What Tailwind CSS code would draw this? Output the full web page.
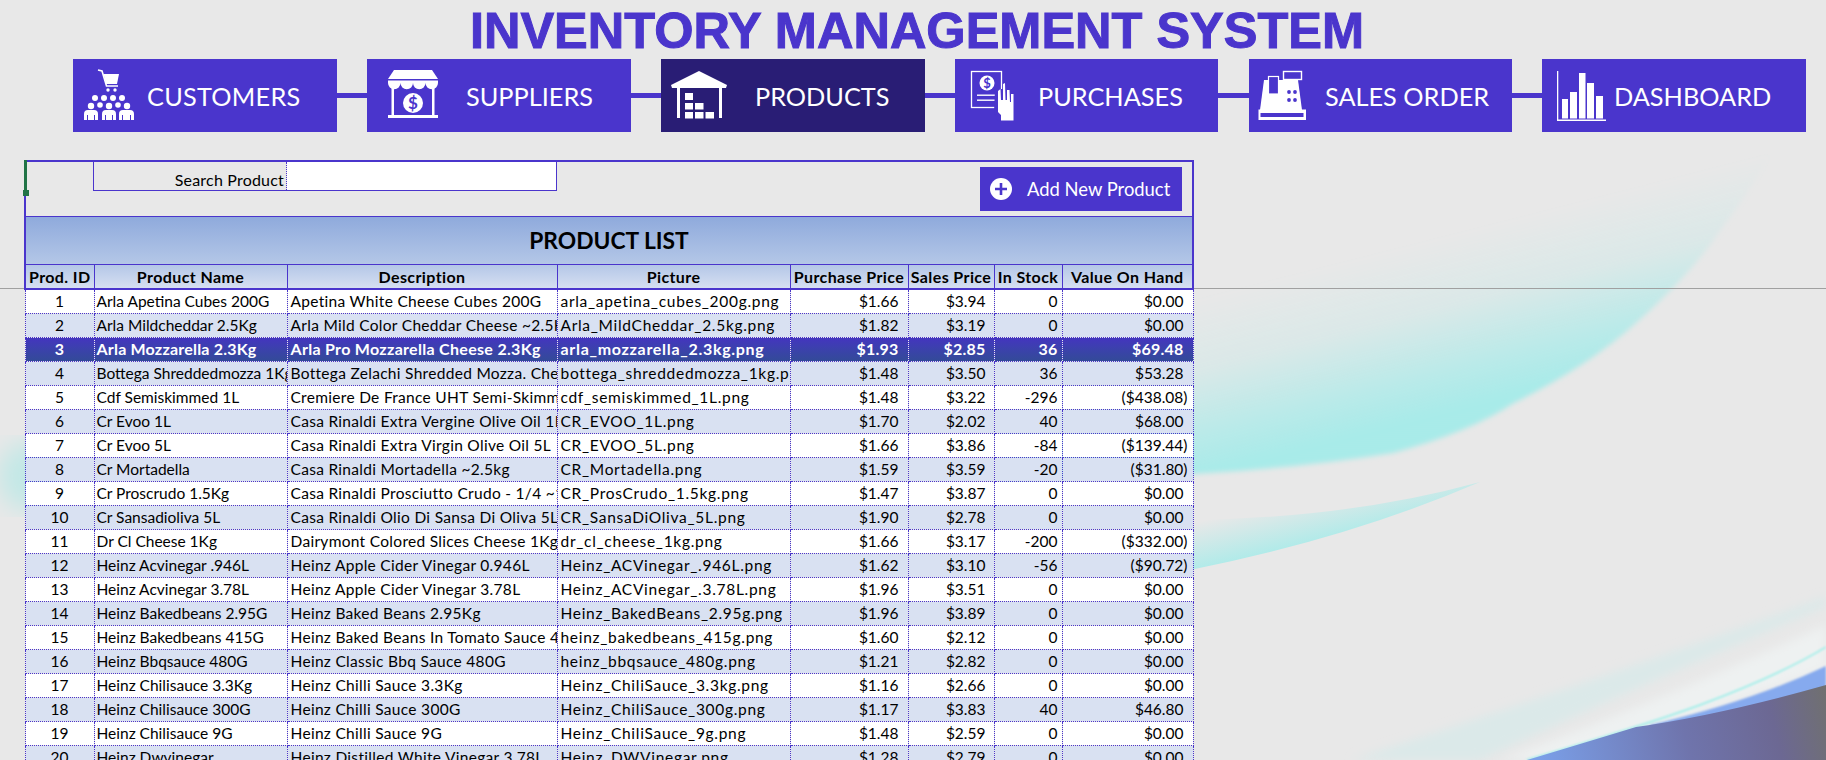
<!DOCTYPE html>
<html lang="en">
<head>
    <meta charset="UTF-8">
    <title>Inventory Management System</title>
    <script src="https://cdn.jsdelivr.net/npm/@tailwindcss/browser@4"></script>
</head>
<body class="relative w-[1826px] h-[760px] overflow-hidden bg-[#e8e8e8] font-['Lato','Liberation_Sans',sans-serif] text-black">

    <!-- background swooshes -->
    <svg class="absolute inset-0" width="1826" height="760" viewBox="0 0 1826 760">
        <defs>
            <linearGradient id="bigSwoosh" gradientUnits="userSpaceOnUse" x1="1194" y1="300" x2="1236" y2="465">
                <stop offset="0" stop-color="#a5ebe9" stop-opacity="0"/>
                <stop offset="0.4" stop-color="#a5ebe9" stop-opacity="0.2"/>
                <stop offset="0.78" stop-color="#a5ebe9" stop-opacity="0.7"/>
                <stop offset="1" stop-color="#a5ebe9" stop-opacity="0.95"/>
            </linearGradient>
            <linearGradient id="thinSwoosh" gradientUnits="userSpaceOnUse" x1="1215" y1="518" x2="1228" y2="572">
                <stop offset="0" stop-color="#a5ebe9" stop-opacity="0"/>
                <stop offset="1" stop-color="#a5ebe9" stop-opacity="1"/>
            </linearGradient>
            <linearGradient id="wedge" gradientUnits="userSpaceOnUse" x1="1540" y1="760" x2="1826" y2="690">
                <stop offset="0" stop-color="#7a9fe8"/>
                <stop offset="0.5" stop-color="#6f74ac"/>
                <stop offset="0.8" stop-color="#6c6893"/>
                <stop offset="1" stop-color="#707070"/>
            </linearGradient>
            <filter id="soft"><feGaussianBlur stdDeviation="2.5"/></filter>
            <filter id="tiny"><feGaussianBlur stdDeviation="1"/></filter>
            <filter id="softer"><feGaussianBlur stdDeviation="5"/></filter>
            <filter id="softest"><feGaussianBlur stdDeviation="12"/></filter>
        </defs>
        <path filter="url(#soft)" fill="url(#bigSwoosh)" d="M1000 482 Q1130 478 1194 474 Q1300 468 1393 453 Q1470 432 1514 403 Q1590 365 1636 323 Q1690 275 1717 235 Q1755 185 1790 120 L1500 60 L1000 250 Z"/>
        <ellipse cx="30" cy="476" rx="32" ry="34" fill="#b9e8e6" fill-opacity="0.8" filter="url(#softest)"/>
        <path fill="url(#thinSwoosh)" d="M1190 570 Q1350 538 1480 482 Q1350 518 1190 520 Z"/>
        <path filter="url(#softer)" fill="#eef1f1" d="M1500 760 Q1650 705 1826 625 L1826 670 L1560 760 Z"/>
        <path filter="url(#softer)" fill="#dbe9e9" d="M1352 760 Q1600 680 1826 597 L1826 606 Q1640 685 1480 760 Z"/>
        <path filter="url(#tiny)" fill="none" stroke="#a6efea" stroke-width="2" d="M1527 760 Q1640 727 1700 705 Q1780 675 1826 647"/>
        <path filter="url(#tiny)" fill="#86aaee" d="M1650 725 Q1750 702 1826 666 L1826 692 L1650 730 Z"/>
        <path fill="url(#wedge)" d="M1527 760 Q1600 738 1636 727 Q1720 715 1826 685 L1826 760 Z"/>
    </svg>

    <!-- frozen pane line -->
    <div class="absolute left-0 top-[288px] w-full h-px bg-[#a0a0a0]"></div>

    <div class="relative">
        <h1 class="h-[59px] flex items-center justify-center pl-[8px] pt-[4px] font-['Liberation_Sans',sans-serif] font-bold text-[50.5px] leading-none text-[#4a35cc] [-webkit-text-stroke:1px_#4a35cc]">INVENTORY MANAGEMENT SYSTEM</h1>

        <!-- nav -->
        <nav class="flex items-center ml-[73px] text-white text-[25.3px]">
            <a class="flex w-[264px] h-[73px] pt-[3px] bg-[#4a35cc]">
                <svg class="ml-[7px] shrink-0" width="60" height="66" viewBox="0 0 60 66" fill="#fff">
                    <path fill="none" stroke="#fff" stroke-width="1.6" d="M18 8 L22 9 L26.5 24 L38 24"/>
                    <path d="M23.5 12 L39 12 L37 22 L26 22 Z"/>
                    <circle cx="28" cy="28" r="1.7"/><circle cx="35" cy="28" r="1.7"/>
                    <circle cx="15" cy="36" r="3"/><circle cx="24" cy="36" r="3"/><circle cx="33" cy="36" r="3"/><circle cx="42" cy="36" r="3"/>
                    <circle cx="11" cy="44" r="3.2"/><circle cx="20" cy="43" r="2.8"/><circle cx="29" cy="44" r="3.2"/><circle cx="38" cy="43" r="2.8"/><circle cx="47" cy="44" r="3.2"/>
                    <path d="M4 58 L4 52 Q4 48 8 48 L14 48 Q18 48 18 52 L18 58 L15 58 L15 53 L14 53 L14 58 L8 58 L8 53 L7 53 L7 58 Z"/>
                    <path d="M22 58 L22 52 Q22 48 26 48 L32 48 Q36 48 36 52 L36 58 L33 58 L33 53 L32 53 L32 58 L26 58 L26 53 L25 53 L25 58 Z"/>
                    <path d="M39 58 L39 52 Q39 48 43 48 L50 48 Q54 48 54 52 L54 58 L51 58 L51 53 L50 53 L50 58 L43 58 L43 53 L42 53 L42 58 Z"/>
                </svg>
                <span class="ml-[7px] leading-[68px] tracking-[0.25px]">CUSTOMERS</span>
            </a>
            <div class="w-[30px] h-[5px] bg-[#4a35cc]"></div>
            <a class="flex w-[264px] h-[73px] pt-[3px] bg-[#4a35cc]">
                <svg class="ml-[11px] shrink-0" width="70" height="66" viewBox="0 0 70 66" fill="#fff">
                    <path d="M16 8 L54 8 L60 17 L10 17 Z"/>
                    <path d="M10 18.5 L60 18.5 L60 21 A6.2 6.2 0 0 1 47.5 21 A6.2 6.2 0 0 1 35 21 A6.2 6.2 0 0 1 22.5 21 A6.2 6.2 0 0 1 10 21 Z"/>
                    <rect x="13.5" y="26" width="2.5" height="27"/><rect x="54" y="26" width="2.5" height="27"/>
                    <rect x="10" y="53" width="50" height="3"/>
                    <circle cx="35" cy="41" r="10"/>
                    <text x="35" y="47" text-anchor="middle" font-size="17" font-weight="700" fill="#4a35cc">$</text>
                </svg>
                <span class="ml-[18px] leading-[68px]">SUPPLIERS</span>
            </a>
            <div class="w-[30px] h-[5px] bg-[#4a35cc]"></div>
            <a class="flex w-[264px] h-[73px] pt-[3px] bg-[#291d75]">
                <svg class="ml-[4px] shrink-0" width="70" height="66" viewBox="0 0 70 66" fill="#fff">
                    <path d="M34 9 L62 23 L61 26 L7 26 L6 23 Z"/>
                    <rect x="12" y="26" width="3" height="30"/><rect x="54" y="26" width="3" height="30"/>
                    <rect x="20" y="31" width="8" height="7"/>
                    <rect x="20" y="41" width="8" height="6.5"/><rect x="30" y="41" width="8.5" height="6.5"/>
                    <rect x="20" y="50" width="8" height="6.5"/><rect x="30" y="50" width="8.5" height="6.5"/><rect x="40.5" y="50" width="8.5" height="6.5"/>
                </svg>
                <span class="ml-[20px] leading-[68px]">PRODUCTS</span>
            </a>
            <div class="w-[30px] h-[5px] bg-[#4a35cc]"></div>
            <a class="flex w-[263px] h-[73px] pt-[3px] bg-[#4a35cc]">
                <svg class="ml-[5px] shrink-0" width="70" height="66" viewBox="0 0 70 66" fill="#fff">
                    <rect x="11.5" y="9.5" width="30" height="36" fill="none" stroke="#fff" stroke-width="1.3"/>
                    <circle cx="27" cy="21" r="7.5"/>
                    <text x="27" y="26" text-anchor="middle" font-size="13" font-weight="700" fill="#4a35cc">$</text>
                    <rect x="17" y="32.5" width="19" height="1.4"/><rect x="17" y="37.5" width="19" height="1.4"/>
                    <path fill="#4a35cc" d="M35 27 L55 27 L55 60 L38 60 L34 50 Z"/>
                    <path d="M38 50 L38 29 L40.5 27 L41 38 L43 38 L43 22 L45 21 L45.5 38 L47 38 L47 28 L49.5 28 L50 40 L51 40 L51 32 L53.5 32 L53.5 58.5 L41 58.5 L41 53 Z"/>
                </svg>
                <span class="ml-[8px] leading-[68px]">PURCHASES</span>
            </a>
            <div class="w-[31px] h-[5px] bg-[#4a35cc]"></div>
            <a class="flex w-[263px] h-[73px] pt-[3px] bg-[#4a35cc]">
                <svg class="ml-[6px] shrink-0" width="56" height="66" viewBox="0 0 56 66" fill="#fff">
                    <rect x="28.5" y="9.5" width="18" height="8" fill="none" stroke="#fff" stroke-width="1.4"/>
                    <rect x="37" y="17" width="2" height="7"/>
                    <path d="M9 18 L43 18 L47 48 L5 48 Z"/>
                    <rect x="13.5" y="14.5" width="10" height="17.5" fill="#4a35cc" stroke="#fff" stroke-width="1.2"/>
                    <circle cx="34" cy="30" r="1.9" fill="#4a35cc"/><circle cx="40" cy="30" r="1.9" fill="#4a35cc"/>
                    <circle cx="34" cy="38" r="1.9" fill="#4a35cc"/><circle cx="40" cy="38" r="1.9" fill="#4a35cc"/>
                    <rect x="3.5" y="47.5" width="47.5" height="10.5"/>
                    <rect x="5.5" y="51" width="43" height="4" fill="#4a35cc"/>
                </svg>
                <span class="ml-[14px] leading-[68px]">SALES ORDER</span>
            </a>
            <div class="w-[30px] h-[5px] bg-[#4a35cc]"></div>
            <a class="flex w-[264px] h-[73px] pt-[3px] bg-[#4a35cc]">
                <svg class="ml-[8px] shrink-0" width="60" height="66" viewBox="0 0 60 66" fill="#fff">
                    <rect x="7" y="9" width="1.3" height="49"/><rect x="7" y="57.5" width="49" height="1.5"/>
                    <rect x="12" y="37" width="6" height="19.5"/><rect x="20" y="30" width="7" height="26.5"/><rect x="29" y="11" width="6.5" height="45.5"/><rect x="37" y="21" width="7" height="35.5"/><rect x="46" y="34" width="7" height="22.5"/>
                </svg>
                <span class="ml-[4px] leading-[68px]">DASHBOARD</span>
            </a>
        </nav>

        <!-- product list -->
        <div class="ml-[24px] mt-[28px] w-[1170px]">
            <div class="relative flex justify-between items-start h-[56px] border-x-2 border-t-2 border-[#4a35cc]">
                <div class="absolute left-[-2px] top-[-2px] w-[3px] h-[31px] bg-[#217346]"></div>
                <div class="absolute left-[-3px] top-[28px] w-[6px] h-[6px] bg-[#217346]"></div>
                <div class="ml-[67px] flex w-[464px] h-[29px] border-x border-b border-[#4a35cc] text-[16px] tracking-[0.2px]">
                    <div class="w-[193px] pr-[2px] pt-[7px] text-right leading-[22px] border-r border-dotted border-[#4a35cc]">Search Product</div>
                    <div class="flex-1 bg-white"></div>
                </div>
                <button class="flex items-center w-[202px] h-[44px] mt-[5px] mr-[10px] pl-[10px] bg-[#4a35cc] text-white text-[18.4px]">
                    <svg width="22" height="22" viewBox="0 0 22 22"><circle cx="11" cy="11" r="11" fill="#fff"/><path d="M11 5v12M5 11h12" stroke="#4a35cc" stroke-width="2.6"/></svg>
                    <span class="ml-[15px] pt-[2px]">Add New Product</span>
                </button>
            </div>
            <div class="h-[48px] flex items-center justify-center border-x-2 border-t border-[#4a35cc] bg-gradient-to-b from-[#8faadc] to-[#b4c7e7] text-[22.8px] font-bold">PRODUCT LIST</div>
            <table class="w-[1170px] table-fixed border-collapse text-[15.5px] leading-[22px] [&_td]:h-[24px] [&_td]:p-0 [&_td]:px-[3px] [&_td]:border [&_td]:border-dotted [&_td]:border-[#4a35cc] [&_td]:overflow-hidden [&_td]:whitespace-nowrap [&_td:first-child]:text-center [&_td:nth-child(2)]:pl-[2px] [&_td:nth-child(3)]:tracking-[0.3px] [&_td:nth-child(4)]:tracking-[0.7px] [&_td:nth-child(n+5)]:text-right [&_td:nth-child(5)]:pr-[9px] [&_td:nth-child(6)]:pr-[8px] [&_td:nth-child(7)]:pr-[4px] [&_td:nth-child(8)]:pr-[9px] [&_tbody_tr:nth-child(odd)]:bg-white [&_tbody_tr:nth-child(even)]:bg-[#d9e1f2]">
                <colgroup>
                    <col class="w-[69px]"><col class="w-[193px]"><col class="w-[270px]"><col class="w-[233px]"><col class="w-[118px]"><col class="w-[86px]"><col class="w-[68px]"><col class="w-[131px]">
                </colgroup>
                <thead class="bg-gradient-to-b from-[#b4c7e7] to-[#d9e1f2] font-bold text-[16px] tracking-[0.4px] [&_th]:h-[24px] [&_th]:p-0 [&_th]:pt-[1px] [&_th]:border [&_th]:border-[#4a35cc] [&_th]:border-b-2 [&_th]:whitespace-nowrap [&_th:first-child]:border-l-2 [&_th:last-child]:border-r-2">
                    <tr><th>Prod. ID</th><th>Product Name</th><th>Description</th><th>Picture</th><th>Purchase Price</th><th>Sales Price</th><th>In Stock</th><th>Value On Hand</th></tr>
                </thead>
                <tbody>
                    <tr><td>1</td><td>Arla Apetina Cubes 200G</td><td>Apetina White Cheese Cubes 200G</td><td>arla_apetina_cubes_200g.png</td><td>$1.66</td><td>$3.94</td><td>0</td><td>$0.00</td></tr>
                    <tr><td>2</td><td>Arla Mildcheddar 2.5Kg</td><td>Arla Mild Color Cheddar Cheese ~2.5Kg</td><td>Arla_MildCheddar_2.5kg.png</td><td>$1.82</td><td>$3.19</td><td>0</td><td>$0.00</td></tr>
                    <tr class="!bg-gradient-to-b from-[#4433c0] to-[#334a98] font-bold text-white text-[16px] tracking-[0.2px]"><td>3</td><td>Arla Mozzarella 2.3Kg</td><td>Arla Pro Mozzarella Cheese 2.3Kg</td><td>arla_mozzarella_2.3kg.png</td><td>$1.93</td><td>$2.85</td><td>36</td><td>$69.48</td></tr>
                    <tr><td>4</td><td>Bottega Shreddedmozza 1Kg</td><td>Bottega Zelachi Shredded Mozza. Cheese 1Kg</td><td>bottega_shreddedmozza_1kg.png</td><td>$1.48</td><td>$3.50</td><td>36</td><td>$53.28</td></tr>
                    <tr><td>5</td><td>Cdf Semiskimmed 1L</td><td>Cremiere De France UHT Semi-Skimmed Milk 1L</td><td>cdf_semiskimmed_1L.png</td><td>$1.48</td><td>$3.22</td><td>-296</td><td class="!pr-[5px]">($438.08)</td></tr>
                    <tr><td>6</td><td>Cr Evoo 1L</td><td>Casa Rinaldi Extra Vergine Olive Oil 1L</td><td>CR_EVOO_1L.png</td><td>$1.70</td><td>$2.02</td><td>40</td><td>$68.00</td></tr>
                    <tr><td>7</td><td>Cr Evoo 5L</td><td>Casa Rinaldi Extra Virgin Olive Oil 5L</td><td>CR_EVOO_5L.png</td><td>$1.66</td><td>$3.86</td><td>-84</td><td class="!pr-[5px]">($139.44)</td></tr>
                    <tr><td>8</td><td>Cr Mortadella</td><td>Casa Rinaldi Mortadella ~2.5kg</td><td>CR_Mortadella.png</td><td>$1.59</td><td>$3.59</td><td>-20</td><td class="!pr-[5px]">($31.80)</td></tr>
                    <tr><td>9</td><td>Cr Proscrudo 1.5Kg</td><td>Casa Rinaldi Prosciutto Crudo - 1/4 ~1.5Kg</td><td>CR_ProsCrudo_1.5kg.png</td><td>$1.47</td><td>$3.87</td><td>0</td><td>$0.00</td></tr>
                    <tr><td>10</td><td>Cr Sansadioliva 5L</td><td>Casa Rinaldi Olio Di Sansa Di Oliva 5L</td><td>CR_SansaDiOliva_5L.png</td><td>$1.90</td><td>$2.78</td><td>0</td><td>$0.00</td></tr>
                    <tr><td>11</td><td>Dr Cl Cheese 1Kg</td><td>Dairymont Colored Slices Cheese 1Kg</td><td>dr_cl_cheese_1kg.png</td><td>$1.66</td><td>$3.17</td><td>-200</td><td class="!pr-[5px]">($332.00)</td></tr>
                    <tr><td>12</td><td>Heinz Acvinegar .946L</td><td>Heinz Apple Cider Vinegar 0.946L</td><td>Heinz_ACVinegar_.946L.png</td><td>$1.62</td><td>$3.10</td><td>-56</td><td class="!pr-[5px]">($90.72)</td></tr>
                    <tr><td>13</td><td>Heinz Acvinegar 3.78L</td><td>Heinz Apple Cider Vinegar 3.78L</td><td>Heinz_ACVinegar_.3.78L.png</td><td>$1.96</td><td>$3.51</td><td>0</td><td>$0.00</td></tr>
                    <tr><td>14</td><td>Heinz Bakedbeans 2.95G</td><td>Heinz Baked Beans 2.95Kg</td><td>Heinz_BakedBeans_2.95g.png</td><td>$1.96</td><td>$3.89</td><td>0</td><td>$0.00</td></tr>
                    <tr><td>15</td><td>Heinz Bakedbeans 415G</td><td>Heinz Baked Beans In Tomato Sauce 415G</td><td>heinz_bakedbeans_415g.png</td><td>$1.60</td><td>$2.12</td><td>0</td><td>$0.00</td></tr>
                    <tr><td>16</td><td>Heinz Bbqsauce 480G</td><td>Heinz Classic Bbq Sauce 480G</td><td>heinz_bbqsauce_480g.png</td><td>$1.21</td><td>$2.82</td><td>0</td><td>$0.00</td></tr>
                    <tr><td>17</td><td>Heinz Chilisauce 3.3Kg</td><td>Heinz Chilli Sauce 3.3Kg</td><td>Heinz_ChiliSauce_3.3kg.png</td><td>$1.16</td><td>$2.66</td><td>0</td><td>$0.00</td></tr>
                    <tr><td>18</td><td>Heinz Chilisauce 300G</td><td>Heinz Chilli Sauce 300G</td><td>Heinz_ChiliSauce_300g.png</td><td>$1.17</td><td>$3.83</td><td>40</td><td>$46.80</td></tr>
                    <tr><td>19</td><td>Heinz Chilisauce 9G</td><td>Heinz Chilli Sauce 9G</td><td>Heinz_ChiliSauce_9g.png</td><td>$1.48</td><td>$2.59</td><td>0</td><td>$0.00</td></tr>
                    <tr><td>20</td><td>Heinz Dwvinegar</td><td>Heinz Distilled White Vinegar 3.78L</td><td>Heinz_DWVinegar.png</td><td>$1.28</td><td>$2.79</td><td>0</td><td>$0.00</td></tr>
                </tbody>
            </table>
        </div>
    </div>
</body>
</html>
